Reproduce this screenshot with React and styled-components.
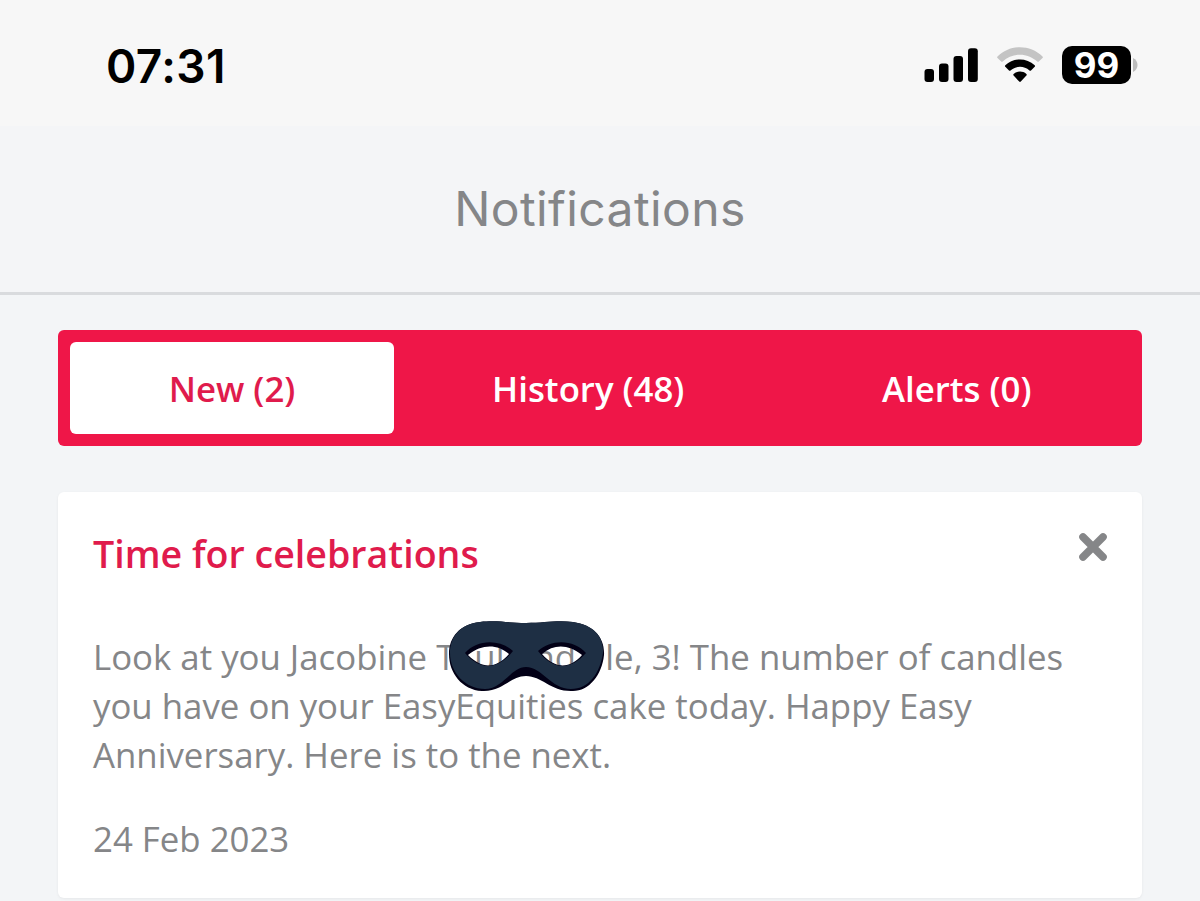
import styled, { createGlobalStyle } from 'styled-components';

export default function App() {
    return (
        <>
            <GlobalStyle />
            <Screen>
                <StatusBar>
                    <Clock>07:31</Clock>
                    <StatusIcons>
                        <Signal />
                        <Wifi />
                        <Battery>
                            <Level>99</Level>
                            <Tip viewBox="0 0 5 14"><path d="M0 0 C6 3 6 11 0 14 Z" fill="#bcbcbc" /></Tip>
                        </Battery>
                    </StatusIcons>
                </StatusBar>
                <Header>
                    <Title>Notifications</Title>
                </Header>
                <Main>
                    <Tabs>
                        <Tab $active>New (2)</Tab>
                        <Tab>History (48)</Tab>
                        <Tab>Alerts (0)</Tab>
                    </Tabs>
                    <Card>
                        <CardTop>
                            <CardTitle>Time for celebrations</CardTitle>
                            <CloseButton aria-label="Close"><Cross /></CloseButton>
                        </CardTop>
                        <Text>
                            <Line>Look at you Jacobine T<Masked><Mask /><Peek $before={19}>ul</Peek><Peek $before={29}>nd</Peek></Masked>le, 3! The number of candles</Line>
                            <Line>you have on your EasyEquities cake today. Happy Easy</Line>
                            <Line>Anniversary. Here is to the next.</Line>
                        </Text>
                        <DateText>24 Feb 2023</DateText>
                    </Card>
                </Main>
            </Screen>
        </>
    )
}

function Signal() {
    return (
        <svg width="54" height="36" viewBox="0 0 54 36">
            <rect x="0.5" y="22" width="9.5" height="13" rx="3" />
            <rect x="15" y="16.5" width="9.5" height="18.5" rx="3" />
            <rect x="29.5" y="9" width="9.5" height="26" rx="3" />
            <rect x="44" y="1.2" width="9.8" height="33.8" rx="3" />
        </svg>
    )
}

function Wifi() {
    return (
        <svg width="46" height="36" viewBox="0 0 46 36">
            <path d="M0.5 9.5 C13 -2.8 33 -2.8 45.5 9.5 C46 10 46 10.6 45.5 11.1 L41.8 14.6 C41.3 15 40.8 15 40.3 14.6 C30.5 5.4 15.5 5.4 5.7 14.6 C5.2 15 4.7 15 4.2 14.6 L0.5 11.1 C0 10.6 0 10 0.5 9.5 Z" fill="#c4c4c4" />
            <path d="M8.3 18.3 C16.5 10.6 29.5 10.6 37.7 18.3 C38.2 18.8 38.2 19.4 37.7 19.8 L34 23.4 C33.5 23.8 33 23.8 32.5 23.4 C27 18.6 19 18.6 13.5 23.4 C13 23.8 12.5 23.8 12 23.4 L8.3 19.8 C7.8 19.4 7.8 18.8 8.3 18.3 Z" />
            <path d="M16.6 27 C20.3 23.8 25.7 23.8 29.4 27 C29.9 27.5 29.9 28.1 29.4 28.6 L23.8 34.6 C23.3 35.1 22.7 35.1 22.2 34.6 L16.6 28.6 C16.1 28.1 16.1 27.5 16.6 27 Z" />
        </svg>
    )
}

function Cross() {
    return (
        <svg width="30" height="30" viewBox="0 0 30 30">
            <path d="M5 5 L25 25 M25 5 L5 25" stroke="#858688" strokeWidth="7.6" strokeLinecap="round" />
        </svg>
    )
}

function Mask() {
    return (
        <MaskSvg viewBox="0 0 157 72">
            <path
                fillRule="evenodd"
                fill="#020016"
                d="M32 1 C50 -1 60 2 78 2 C97 2 108 -1 125 1 C146 4 157 17 156 34 C154 54 141 70 125 70 C103 71 94 55 78 55 C62 55 55 71 34 70 C14 69 1 52 1 33 C1 16 12 3 32 1 Z M20 34 C34 48 48 48 61 33 C49 23 34 23 20 34 Z M94 33 C107 48 122 48 134 34 C120 23 106 23 94 33 Z"
            />
            <path
                fillRule="evenodd"
                fill="#1e2f44"
                d="M32 1 C50 -1 60 2 78 2 C97 2 108 -1 125 1 C146 4 156 16 155 32 C152 52 141 68 123 68 C103 68 94 46 78 46 C63 46 55 68 37 68 C17 68 2 51 2 32 C2 16 12 3 32 1 Z M17 32 C32 50 50 49 65 30 C52 18 29 18 17 32 Z M90 30 C105 49 122 50 138 32 C126 18 103 18 90 30 Z"
            />
        </MaskSvg>
    )
}

const GlobalStyle = createGlobalStyle`
    * {
        box-sizing: border-box;
    }
    body {
        margin: 0;
        background-color: #f3f5f7;
        overflow: hidden;
    }
`

const Screen = styled.div`
    height: 901px;
    overflow: hidden;
    font-family: "Open Sans", sans-serif;
    color: #858688;
`

const StatusBar = styled.div`
    height: 126px;
    padding: 0 62px 0 106px;
    display: flex;
    justify-content: space-between;
    background-color: #f7f7f7;
    color: #000;
    font-family: Inter, sans-serif;
`

const Clock = styled.span`
    padding-top: 38px;
    font-size: 46px;
    line-height: 56px;
    font-weight: 600;
    letter-spacing: 0.4px;
`

const StatusIcons = styled.div`
    height: 38px;
    margin-top: 46px;
    display: flex;
    align-items: center;

    & > svg {
        margin-right: 19px;
    }
`

const Battery = styled.div`
    display: flex;
    align-items: center;
`

const Level = styled.span`
    width: 69px;
    height: 38px;
    border-radius: 10px;
    background-color: #000;
    color: #fff;
    font-size: 35px;
    line-height: 38px;
    font-weight: 700;
    text-align: center;
`

const Tip = styled.svg`
    width: 5px;
    height: 14px;
    margin-left: 2px;
`

const Header = styled.header`
    height: 169px;
    display: flex;
    justify-content: center;
    background-color: #f4f5f7;
    border-bottom: 3px solid #d9dbde;
`

const Title = styled.h1`
    margin: 0;
    padding-top: 53px;
    font-family: Inter, sans-serif;
    font-size: 48px;
    line-height: 60px;
    font-weight: 400;
    letter-spacing: 0.4px;
`

const Main = styled.main`
    padding: 35px 58px 0;
`

const Tabs = styled.nav`
    height: 116px;
    padding: 12px 1px 12px 12px;
    display: grid;
    grid-template-columns: 334px 1fr 1fr;
    border-radius: 6px;
    background-color: #ef1648;
`

const Tab = styled.button`
    margin-right: ${props => props.$active ? '10px' : '0'};
    padding: 0;
    border: 0;
    border-radius: 6px;
    background-color: ${props => props.$active ? '#fff' : 'transparent'};
    color: ${props => props.$active ? '#e01b4c' : '#fff'};
    font-family: inherit;
    font-size: 34.8px;
    font-weight: 600;
`

const Card = styled.article`
    height: 406px;
    margin-top: 46px;
    padding: 36px 34px 0 35px;
    border-radius: 6px;
    background-color: #fff;
    box-shadow: 0 1px 3px rgba(0, 0, 0, 0.06);
`

const CardTop = styled.div`
    display: flex;
    justify-content: space-between;
    align-items: flex-start;
`

const CardTitle = styled.h2`
    margin: 0;
    color: #e01b4c;
    font-size: 37.6px;
    line-height: 52px;
    font-weight: 600;
`

const CloseButton = styled.button`
    height: 30px;
    margin-top: 4px;
    padding: 0;
    border: 0;
    background: none;
`

const Text = styled.p`
    margin: 52px 0 0;
    font-size: 34.8px;
    line-height: 49px;
`

const Line = styled.span`
    display: block;
    white-space: nowrap;
`

const Masked = styled.span`
    position: relative;
    display: inline-block;
    width: 150px;
`

const Peek = styled.span`
    margin-left: ${props => props.$before}px;
`

const MaskSvg = styled.svg`
    position: absolute;
    left: -7px;
    top: -11px;
    width: 157px;
    height: 72px;
    z-index: 1;
`

const DateText = styled.time`
    display: block;
    margin-top: 35px;
    font-size: 34.8px;
    line-height: 49px;
`
